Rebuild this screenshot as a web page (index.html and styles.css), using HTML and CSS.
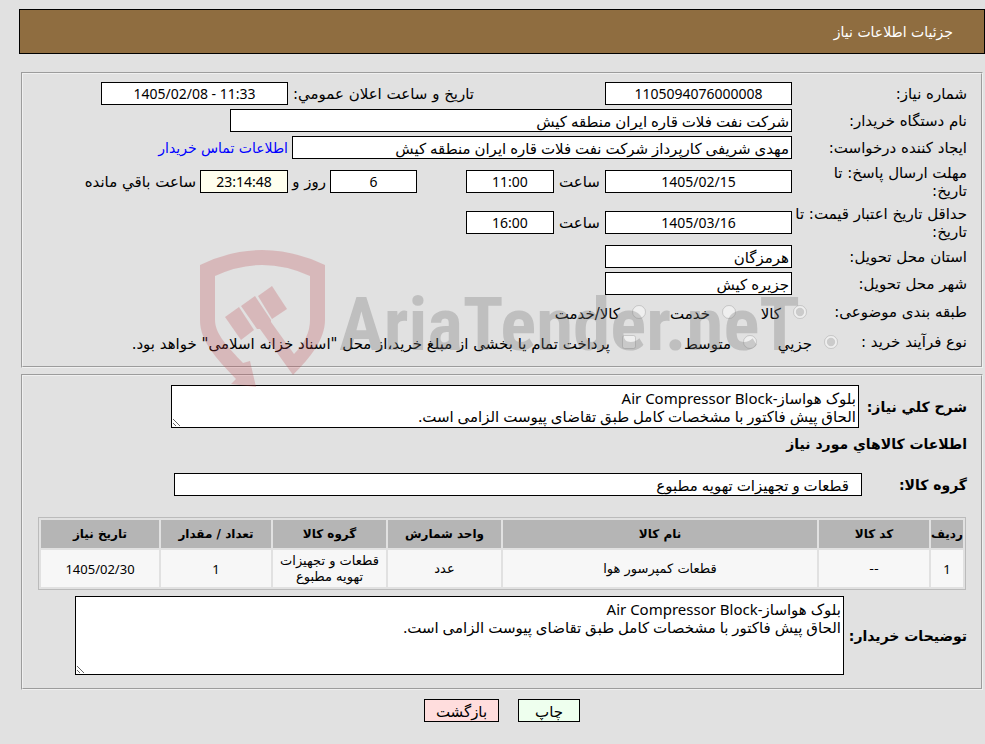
FILE: index.html
```html
<!DOCTYPE html>
<html lang="fa" dir="rtl">
    <head>
        <meta charset="utf-8">
        <meta name="viewport" content="width=device-width, initial-scale=1">
        <title>جزئیات اطلاعات نیاز</title>
        <link rel="stylesheet" href="styles.css">
    </head>
    <body>
        <div class="page">
            <h1 class="header">جزئیات اطلاعات نیاز</h1>

            <fieldset class="panel">
                <div class="row">
                    <label class="caption" for="needNo">شماره نیاز:</label>
                    <input class="box date" id="needNo" type="text" value="1105094076000008" readonly>
                    <label class="announce" for="announceDate">تاریخ و ساعت اعلان عمومي:</label>
                    <input class="box date" id="announceDate" type="text" dir="ltr" value="1405/02/08 - 11:33" readonly>
                </div>
                <div class="row">
                    <label class="caption" for="buyerOrg">نام دستگاه خریدار:</label>
                    <input class="box org" id="buyerOrg" type="text" value="شرکت نفت فلات قاره ایران منطقه کیش" readonly>
                </div>
                <div class="row">
                    <label class="caption" for="creator">ایجاد کننده درخواست:</label>
                    <input class="box creator" id="creator" type="text" value="مهدی شریفی کارپرداز شرکت نفت فلات قاره ایران منطقه کیش" readonly>
                    <a class="contact" href="#">اطلاعات تماس خریدار</a>
                </div>
                <div class="row tall">
                    <label class="caption" for="replyDate">مهلت ارسال پاسخ: تا<br>تاریخ:</label>
                    <input class="box date" id="replyDate" type="text" value="1405/02/15" readonly>
                    <label class="hour" for="replyHour">ساعت</label>
                    <input class="box time" id="replyHour" type="text" value="11:00" readonly>
                    <input class="box time days" id="days" type="text" value="6" readonly>
                    <label class="day" for="days">روز و</label>
                    <input class="box time left" id="remain" type="text" value="23:14:48" readonly>
                    <label class="remain" for="remain">ساعت باقي مانده</label>
                </div>
                <div class="row tall">
                    <label class="caption" for="priceDate">حداقل تاریخ اعتبار قیمت: تا<br>تاریخ:</label>
                    <input class="box date" id="priceDate" type="text" value="1405/03/16" readonly>
                    <label class="hour" for="priceHour">ساعت</label>
                    <input class="box time" id="priceHour" type="text" value="16:00" readonly>
                </div>
                <div class="row">
                    <label class="caption" for="province">استان محل تحویل:</label>
                    <input class="box place" id="province" type="text" value="هرمزگان" readonly>
                </div>
                <div class="row">
                    <label class="caption" for="city">شهر محل تحویل:</label>
                    <input class="box place" id="city" type="text" value="جزیره کیش" readonly>
                </div>
                <div class="row options">
                    <span class="caption subject">طبقه بندی موضوعی:</span>
                    <label class="option goods"><input type="radio" name="subject" checked disabled><span>کالا</span></label>
                    <label class="option service"><input type="radio" name="subject" disabled><span>خدمت</span></label>
                    <label class="option"><input type="radio" name="subject" disabled><span>کالا/خدمت</span></label>
                </div>
                <div class="row options">
                    <span class="caption process">نوع فرآیند خرید :</span>
                    <label class="option small"><input type="radio" name="process" checked disabled><span>جزیي</span></label>
                    <label class="option medium"><input type="radio" name="process" disabled><span>متوسط</span></label>
                    <label class="option"><input type="checkbox" disabled><span>پرداخت تمام یا بخشی از مبلغ خرید،از محل "اسناد خزانه اسلامی" خواهد بود.</span></label>
                </div>
            </fieldset>

            <fieldset class="panel details">
                <div class="block">
                    <label class="title" for="summary">شرح كلي نياز:</label>
                    <textarea class="summary" id="summary" readonly>بلوک هواساز-Air Compressor Block
الحاق پیش فاکتور با مشخصات کامل طبق تقاضای پیوست الزامی است.</textarea>
                </div>
                <h2 class="title">اطلاعات كالاهاي مورد نياز</h2>
                <div class="block group">
                    <label class="title" for="group">گروه كالا:</label>
                    <input class="box" id="group" type="text" value="قطعات و تجهیزات تهویه مطبوع" readonly>
                </div>
                <table class="items">
                    <thead>
                        <tr>
                            <th class="c-row">ردیف</th>
                            <th class="c-code">کد کالا</th>
                            <th>نام کالا</th>
                            <th class="c-mid">واحد شمارش</th>
                            <th class="c-mid">گروه کالا</th>
                            <th class="c-code">تعداد / مقدار</th>
                            <th class="c-date">تاریخ نیاز</th>
                        </tr>
                    </thead>
                    <tbody>
                        <tr>
                            <td class="num">1</td>
                            <td>--</td>
                            <td>قطعات کمپرسور هوا</td>
                            <td>عدد</td>
                            <td>قطعات و تجهیزات تهویه مطبوع</td>
                            <td class="num">1</td>
                            <td class="num">1405/02/30</td>
                        </tr>
                    </tbody>
                </table>
                <div class="block">
                    <label class="title" for="notes">توضیحات خریدار:</label>
                    <textarea class="notes" id="notes" readonly>بلوک هواساز-Air Compressor Block
الحاق پیش فاکتور با مشخصات کامل طبق تقاضای پیوست الزامی است.</textarea>
                </div>
            </fieldset>

            <div class="buttons">
                <button class="btn print" type="button">چاپ</button>
                <button class="btn back" type="button">بازگشت</button>
            </div>

            <svg class="watermark" width="602" height="140" viewBox="198 248 602 140" direction="ltr" aria-hidden="true">
                <g fill="#bd4149" fill-opacity="0.25">
                    <path d="M200 265 Q262 235 325 265 V320 C325 339 311 357 293 375 L260 329 H257 L241 306 L255 296 L271 320 V322 L294 354 Q310 338 310 320 V276 Q262 254 215 276 V320 C215 334 228 347 243 363 L250 361 L256 387 L231 384 L236 379 C216 358 200 341 200 320 Z"/>
                    <path d="M225 317 L239 307 L254 330 L241 340 Z"/>
                    <path d="M258 296 L272 286 L287 309 L272 319 Z"/>
                </g>
                <text class="brand" x="339" y="350">AriaTender.neT</text>
            </svg>
        </div>
    </body>
</html>
```
FILE: styles.css
```css
* {
    box-sizing: border-box;
}
body {
    margin: 0;
    background: #e1e1e1;
    color: #000;
    font-family: Tahoma, "DejaVu Sans", sans-serif;
    font-size: 14px;
    line-height: 18px;
}
input, textarea, button {
    font-family: Tahoma, "Noto Sans", "DejaVu Sans", sans-serif;
    font-size: 15px;
    line-height: 18px;
    color: #000;
}
.page {
    position: relative;
    padding: 9px 0 0 19px;
}
.header {
    margin: 0 0 18px;
    padding: 13px 31px;
    height: 45px;
    border: 1px solid #000;
    background: #8f6d40;
    color: #fff;
    font-size: 14px;
    font-weight: normal;
    line-height: 18px;
}
.panel {
    margin: 0 2px 6px;
    padding: 6px 14px 9px;
    border: 2px groove #f0f0f0;
    min-width: 0;
}
.row {
    display: flex;
    align-items: center;
    height: 27px;
    font-size: 15px;
    white-space: nowrap;
}
.row.tall {
    height: 41px;
}
.row.options {
    height: 30px;
}
.caption {
    flex: none;
    width: 175px;
}
.box {
    height: 23px;
    padding: 1px 2px;
    border: 1px solid #000;
    border-radius: 0;
    background: #fff;
}
.date, .time {
    font-size: 14px;
    text-align: center;
}
.date, .place {
    width: 187px;
}
.announce {
    width: 186px;
    margin-right: 131px;
}
.org {
    width: 562px;
}
.creator {
    width: 500px;
}
.contact {
    margin-right: 4px;
    color: #00f;
    font-size: 14px;
    text-decoration: none;
}
.hour {
    width: 51px;
    text-align: center;
}
.time {
    width: 88px;
}
.days {
    width: 87px;
    margin-right: 49px;
}
.day {
    width: 42px;
    padding-right: 4px;
}
.left {
    background: #ffffee;
}
.remain {
    margin-right: 4px;
}
.caption.subject {
    width: 160px;
}
.caption.process {
    width: 129px;
}
.option {
    display: flex;
    align-items: center;
}
.option input {
    width: 14px;
    height: 14px;
    margin: 0 0 1px 12px;
}
.option span {
    padding-top: 4px;
}
.goods {
    width: 71px;
}
.service {
    width: 90px;
}
.small {
    width: 81px;
}
.medium {
    width: 121px;
}
.details {
    padding: 9px 14px 13px;
}
.title {
    margin: 0;
    font-size: 14px;
    font-weight: bold;
}
.block {
    display: flex;
    align-items: center;
}
.block .title {
    flex: none;
    width: 108px;
}
textarea {
    display: block;
    margin: 0;
    padding: 3px 2px 0;
    border: 1px solid #000;
    background: #fff;
    resize: both;
}
.summary {
    width: 688px;
    height: 43px;
}
h2.title {
    margin: 7px 0 20px;
}
.group .title {
    width: 105px;
}
.group .box {
    width: 688px;
    padding-right: 12px;
}
.items {
    width: calc(100% - 2px);
    margin: 21px 1px 6px 0;
    border: 1px solid #bbb;
    border-spacing: 2px;
    table-layout: fixed;
    font-size: 13px;
    line-height: 16px;
    text-align: center;
}
.items th {
    height: 28px;
    padding: 0;
    background: #b5b5b5;
    font-size: 12px;
}
.items td {
    height: 37px;
    padding: 2px 4px;
    background: #f7f7f7;
}
.items .num {
    font-family: Tahoma, "Noto Sans", sans-serif;
}
.items .c-row {
    width: 32px;
}
.items .c-code {
    width: 110px;
}
.items .c-mid {
    width: 113px;
}
.items .c-date {
    width: 118px;
}
.block .title[for="notes"] {
    width: 123px;
}
.notes {
    width: 769px;
    height: 79px;
}
.buttons {
    display: flex;
    justify-content: center;
    gap: 19px;
    margin-top: 9px;
}
.btn {
    height: 23px;
    padding: 0;
    border: 1px solid #000;
}
.print {
    width: 62px;
    background: #eeffee;
}
.back {
    width: 75px;
    background: #ffdddd;
}
.watermark {
    position: absolute;
    top: 248px;
    left: 198px;
    pointer-events: none;
}
.brand {
    font-family: "Roboto Condensed", "Roboto", sans-serif;
    font-size: 75px;
    font-weight: bold;
    fill: #707070;
    fill-opacity: 0.3;
}
```
